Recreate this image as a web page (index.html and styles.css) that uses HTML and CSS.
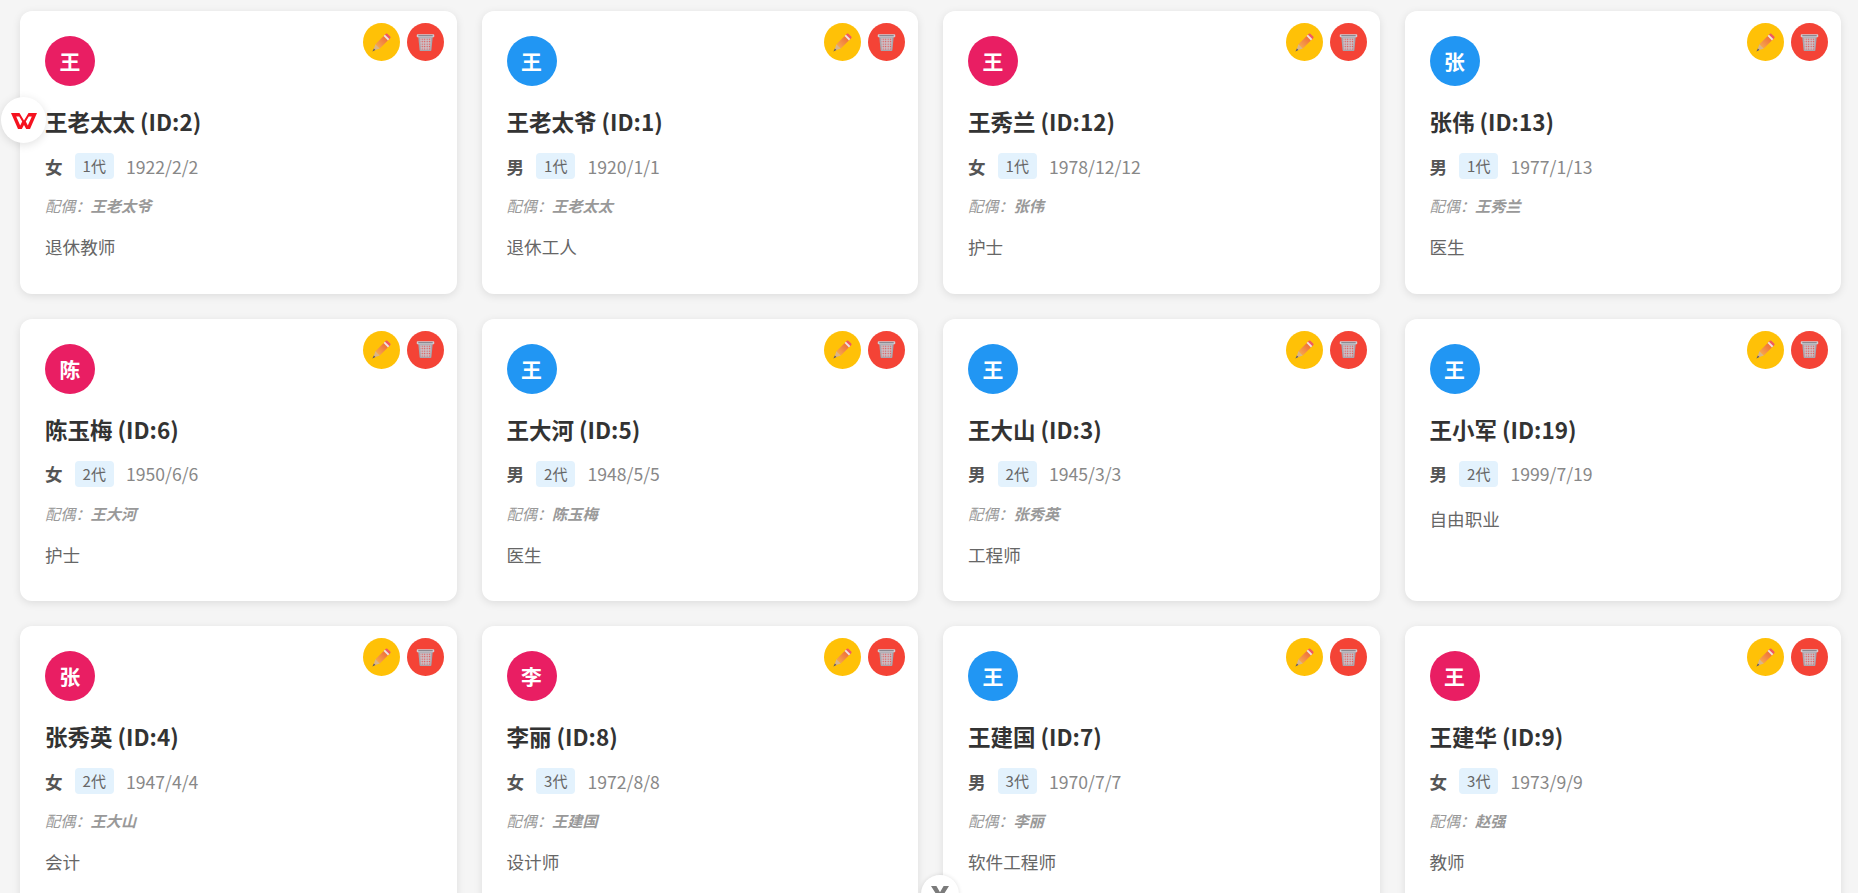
FILE: index.html
```html
<!DOCTYPE html>
<html lang="zh-CN">
<head>
    <meta charset="UTF-8">
    <title>家庭成员</title>
    <link rel="stylesheet" href="styles.css">
</head>
<body>
<svg class="defs" width="0" height="0">
    <defs>
        <linearGradient id="pencilBody" x1="0" y1="1" x2="1" y2="0">
            <stop offset="0" stop-color="#f7b052"/>
            <stop offset="1" stop-color="#ee5f33"/>
        </linearGradient>
        <symbol id="pencil" viewBox="0 0 20 20">
            <path d="M3.6 11.8 13.4 2 18 6.6 8.2 16.4Z" fill="url(#pencilBody)"/>
            <path d="M14.6 .8Q15.4 0 16.2 .8L19.2 3.8Q20 4.6 19.2 5.4L17.6 7 13 2.4Z" fill="#ee5a62"/>
            <path d="M12.2 3.2 13.6 1.8 18.2 6.4 16.8 7.8Z" fill="#efe6df"/>
            <path d="M3.6 11.8 8.2 16.4 1.2 18.8Z" fill="#d9b48c"/>
            <path d="M2 16.4 3.6 18 .4 19.6Z" fill="#5c5560"/>
        </symbol>
        <pattern id="mesh" width="2.6" height="2.6" patternUnits="userSpaceOnUse">
            <rect width="2.6" height="2.6" fill="#cbc7ce"/>
            <rect x=".7" y=".7" width="1.3" height="1.3" fill="#e04c4a"/>
        </pattern>
        <symbol id="trash" viewBox="0 0 20 20">
            <path d="M2.4 4.2H17.6L16.2 18.2Q16.1 19 15.3 19H4.7Q3.9 19 3.8 18.2Z" fill="#a9a6ae"/>
            <path d="M4.2 5.4H15.8L14.8 17.6H5.2Z" fill="url(#mesh)"/>
            <rect x=".8" y="1.2" width="18.4" height="3.2" rx=".8" fill="#cfcdd2"/>
            <rect x="2.4" y="2.2" width="15.2" height="1.2" fill="#85828a"/>
        </symbol>
    </defs>
</svg>

<div class="float-wps">
    <svg viewBox="0 -1 26 18" width="26" height="18">
        <path d="M0 1H8.5L13 8.5 17.5 1H26L19 17H15.2L13 13 10.8 17H7ZM5.2 4.4 9.2 13.4 11.2 9.6 8.2 4.4ZM20.8 4.4H17.8L14.8 9.6 16.8 13.4Z" fill="#f5121f" fill-rule="evenodd"/>
    </svg>
</div>
<div class="float-x"><span class="float-x-mark"></span></div>

<div class="grid" id="grid"></div>

<script>
    var people = [
        ['王老太太', 2, 'f', 1, '1922/2/2', '王老太爷', '退休教师'],
        ['王老太爷', 1, 'm', 1, '1920/1/1', '王老太太', '退休工人'],
        ['王秀兰', 12, 'f', 1, '1978/12/12', '张伟', '护士'],
        ['张伟', 13, 'm', 1, '1977/1/13', '王秀兰', '医生'],
        ['陈玉梅', 6, 'f', 2, '1950/6/6', '王大河', '护士'],
        ['王大河', 5, 'm', 2, '1948/5/5', '陈玉梅', '医生'],
        ['王大山', 3, 'm', 2, '1945/3/3', '张秀英', '工程师'],
        ['王小军', 19, 'm', 2, '1999/7/19', '', '自由职业'],
        ['张秀英', 4, 'f', 2, '1947/4/4', '王大山', '会计'],
        ['李丽', 8, 'f', 3, '1972/8/8', '王建国', '设计师'],
        ['王建国', 7, 'm', 3, '1970/7/7', '李丽', '软件工程师'],
        ['王建华', 9, 'f', 3, '1973/9/9', '赵强', '教师']
    ];

    var html = '';
    people.forEach(function (p) {
        html += '<div class="card">' +
            '<div class="actions">' +
            '<button class="btn btn-edit"><svg width="19" height="19"><use href="#pencil"/></svg></button>' +
            '<button class="btn btn-del"><svg width="19" height="19"><use href="#trash"/></svg></button>' +
            '</div>' +
            '<div class="avatar ' + (p[2] === 'f' ? 'female' : 'male') + '">' + p[0].charAt(0) + '</div>' +
            '<div class="name">' + p[0] + ' (ID:' + p[1] + ')</div>' +
            '<div class="meta"><span class="gender">' + (p[2] === 'f' ? '女' : '男') + '</span>' +
            '<span class="gen">' + p[3] + '代</span>' +
            '<span class="birth">' + p[4] + '</span></div>' +
            (p[5] ? '<div class="spouse">配偶：<b>' + p[5] + '</b></div>' : '') +
            '<div class="job">' + p[6] + '</div>' +
            '</div>';
    });
    document.getElementById('grid').innerHTML = html;
</script>
</body>
</html>
```

FILE: styles.css
```css
* {
    box-sizing: border-box;
}

html, body {
    height: 100%;
}

body {
    margin: 0;
    overflow: hidden;
    background-color: #f5f5f5;
    color: #333;
    font-family: "Noto Sans CJK SC", "Noto Sans", sans-serif;
}

.defs {
    position: absolute;
}

.grid {
    display: grid;
    grid-template-columns: repeat(4, 1fr);
    gap: 25px;
    padding: 11px 17px 0 20px;
}

.card {
    position: relative;
    height: 282.5px;
    padding: 25px;
    background-color: #fff;
    border-radius: 12px;
    box-shadow: 0 2px 8px rgba(0, 0, 0, .1);
}

.actions {
    position: absolute;
    top: 12px;
    right: 13px;
    display: flex;
    gap: 7px;
}

.btn {
    display: flex;
    align-items: center;
    justify-content: center;
    width: 37px;
    height: 38px;
    padding: 0;
    border: none;
    border-radius: 50%;
}

.btn-edit {
    background-color: #ffc107;
}

.btn-del {
    background-color: #f44336;
}

.avatar {
    width: 50px;
    height: 50px;
    line-height: 50px;
    margin-bottom: 18px;
    border-radius: 50%;
    text-align: center;
    color: #fff;
    font-size: 20.8px;
    font-weight: 700;
}

.female {
    background-color: #e91e63;
}

.male {
    background-color: #2196f3;
}

.name {
    margin-bottom: 14px;
    line-height: 35px;
    color: #333;
    font-size: 22.5px;
    font-weight: 700;
}

.meta {
    display: flex;
    align-items: center;
    gap: 12px;
    margin-bottom: 15px;
    font-size: 17.6px;
}

.gender {
    color: #555;
    font-weight: 700;
}

.gen {
    height: 26px;
    line-height: 26px;
    padding: 0 8px;
    background-color: #e3f2fd;
    border-radius: 4px;
    color: #666;
    font-size: 15px;
}

.birth {
    color: #888;
}

.spouse {
    margin-bottom: 14px;
    line-height: 22px;
    color: #999;
    font-size: 15.2px;
    font-style: italic;
}

.job {
    padding-top: 4px;
    line-height: 26px;
    color: #666;
    font-size: 17.6px;
}

.float-wps {
    position: fixed;
    left: 1px;
    top: 97px;
    z-index: 10;
    display: flex;
    align-items: center;
    justify-content: center;
    width: 45px;
    height: 46px;
    background-color: #fff;
    border-radius: 50%;
    box-shadow: 0 2px 10px rgba(0, 0, 0, .12);
}

.float-x {
    position: fixed;
    left: 921px;
    top: 875px;
    z-index: 10;
    display: flex;
    justify-content: center;
    width: 38px;
    height: 38px;
    padding-top: 11px;
    background-color: #fff;
    border-radius: 50%;
    box-shadow: 0 0 4px rgba(0, 0, 0, .12);
}

.float-x-mark {
    width: 18px;
    height: 18px;
    background-color: #7b7b7b;
    clip-path: polygon(0 0, 30% 0, 50% 35%, 70% 0, 100% 0, 65% 55%, 100% 100%, 0 100%, 35% 55%);
}
```
